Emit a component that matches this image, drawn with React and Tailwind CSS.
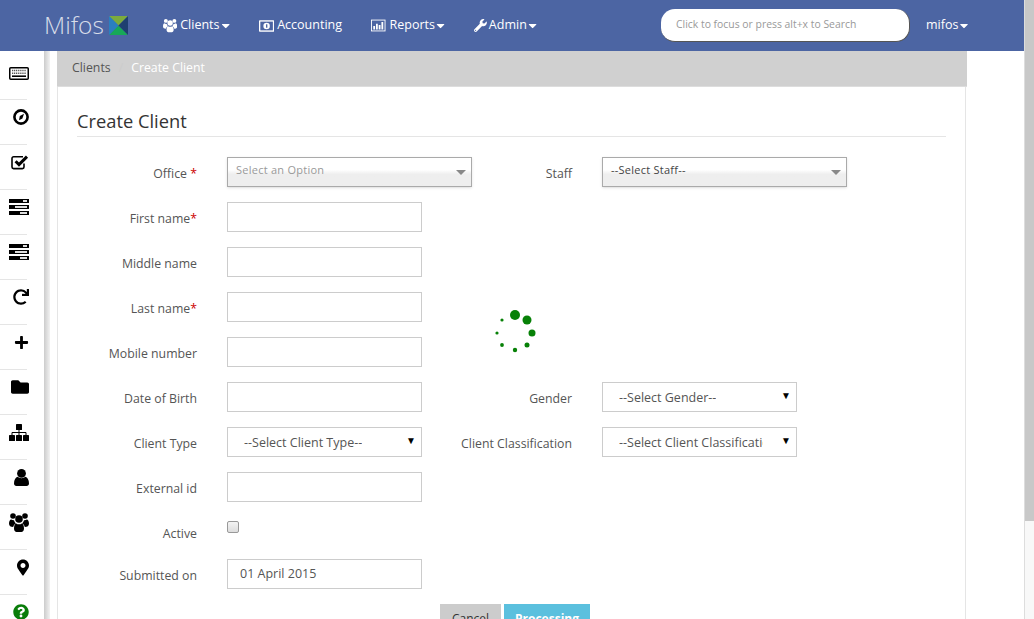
import React from 'react';
import { FaWrench, FaCaretDown, FaRedo, FaPlus, FaFolder, FaMapMarkerAlt, FaQuestionCircle } from 'react-icons/fa';

function KeyboardIcon({ className }) {
  return (
    <svg viewBox="0 0 20 13" className={className}>
      <rect x="0.75" y="0.75" width="18.5" height="11.5" rx="1" fill="#fff" stroke="#000" strokeWidth="1.5" />
      <path d="M3 3.5h14M3 6.2h14" stroke="#555" strokeWidth="1.4" strokeDasharray="1.2 0.7" />
      <path d="M3 9.2h14" stroke="#000" strokeWidth="1.6" />
    </svg>
  );
}

function CompassIcon({ className }) {
  return (
    <svg viewBox="0 0 16 16" className={className}>
      <circle cx="8" cy="8" r="6.6" fill="none" stroke="#000" strokeWidth="2.6" />
      <path d="M11 4.8 9.4 9.6 6 11.2 6.8 7Z" fill="#000" />
    </svg>
  );
}

function CheckSquareIcon({ className }) {
  return (
    <svg viewBox="0 0 18 16" className={className}>
      <path d="M13 9.5V13a1.6 1.6 0 0 1-1.6 1.6H2.6A1.6 1.6 0 0 1 1 13V4.4A1.6 1.6 0 0 1 2.6 2.8H12" fill="none" stroke="#000" strokeWidth="1.6" />
      <path d="M4.6 7.2 8 10.6 16 2.6" fill="none" stroke="#000" strokeWidth="3" />
    </svg>
  );
}

function TasksIcon({ className }) {
  return (
    <svg viewBox="0 0 20 16" className={className}>
      <rect y="0" width="20" height="4" fill="#000" />
      <rect x="14" y="1" width="4" height="2" fill="#ddd" />
      <rect y="6" width="20" height="4" fill="#000" />
      <rect x="6" y="7" width="12" height="2" fill="#ddd" />
      <rect y="12" width="20" height="4" fill="#000" />
      <rect x="11" y="13" width="7" height="2" fill="#ddd" />
    </svg>
  );
}

function SitemapIcon({ className }) {
  return (
    <svg viewBox="0 0 20 17" className={className}>
      <rect x="7" y="0" width="6" height="6" rx="0.6" fill="currentColor" />
      <path d="M10 6v5M3 11V8.5h14V11" fill="none" stroke="currentColor" strokeWidth="1" />
      <rect x="0" y="11" width="6" height="6" rx="0.6" fill="currentColor" />
      <rect x="7" y="11" width="6" height="6" rx="0.6" fill="currentColor" />
      <rect x="14" y="11" width="6" height="6" rx="0.6" fill="currentColor" />
    </svg>
  );
}

function UserIcon({ className }) {
  return (
    <svg viewBox="0 0 15 17" className={className}>
      <circle cx="7.5" cy="4.4" r="4.4" fill="currentColor" />
      <path d="M0 14.6C0 11 1.6 8.4 3.6 7.8 5.6 9.6 9.4 9.6 11.4 7.8 13.4 8.4 15 11 15 14.6 15 16 14 17 12.6 17H2.4C1 17 0 16 0 14.6Z" fill="currentColor" />
    </svg>
  );
}

function UsersIcon({ className }) {
  return (
    <svg viewBox="0 0 20 19" className={className}>
      <circle cx="4" cy="3" r="2.8" fill="currentColor" />
      <circle cx="16" cy="3" r="2.8" fill="currentColor" />
      <circle cx="10" cy="6" r="3.8" fill="currentColor" />
      <path d="M0 10.5C0 8 1 6.6 2.2 6.4 3 7 4 7.3 5 7.2 5.6 9 6.4 10 7 10.4 5.4 11 4.4 12.4 4.2 14 1.6 14 0 13 0 10.5ZM20 10.5C20 8 19 6.6 17.8 6.4 17 7 16 7.3 15 7.2 14.4 9 13.6 10 13 10.4 14.6 11 15.6 12.4 15.8 14 18.4 14 20 13 20 10.5Z" fill="currentColor" />
      <path d="M5 15.5C5 12.6 5.8 10.8 7.2 10.4 8.6 11.6 11.4 11.6 12.8 10.4 14.2 10.8 15 12.6 15 15.5 15 17.6 13.8 19 12.4 19H7.6C6.2 19 5 17.6 5 15.5Z" fill="currentColor" />
    </svg>
  );
}

function MoneyIcon({ className }) {
  return (
    <svg viewBox="0 0 16 12" className={className}>
      <rect width="16" height="12" rx="0.8" fill="#fff" />
      <rect x="1.4" y="1.4" width="13.2" height="9.2" fill="#4c65a3" />
      <circle cx="8" cy="6" r="3.4" fill="#fff" />
      <rect x="7.4" y="4.2" width="1.4" height="3.6" fill="#4c65a3" />
    </svg>
  );
}

function BarChartIcon({ className }) {
  return (
    <svg viewBox="0 0 16 13" className={className}>
      <rect x="0.5" y="0.5" width="15" height="12" fill="none" stroke="#fff" />
      <path d="M2.5 7h2v4h-2ZM5.5 4.5h2V11h-2ZM8.5 6h2v5h-2ZM11.5 2.5h2V11h-2Z" fill="#fff" />
    </svg>
  );
}

function Caret() {
  return <FaCaretDown className="ml-[1px] h-[13px] w-[10px]" />;
}

function NavItem({ icon, label, caret, className }) {
  return (
    <div className={`flex items-center text-[12.5px] text-white ${className}`}>
      {icon}
      <span>{label}</span>
      {caret && <Caret />}
    </div>
  );
}

function Logo() {
  return (
    <div className="ml-[44px] flex w-[85px] items-center">
      <span className="w-[65px] shrink-0 text-[24.5px] leading-none font-light text-[#d8dde9]">Mifos</span>
      <svg viewBox="0 0 19 19" className="h-[19px] w-[19px] shrink-0">
        <polygon points="0,0 19,0 9.5,9.5" fill="#7cab3c" />
        <polygon points="0,19 19,19 9.5,9.5" fill="#17a858" />
        <polygon points="0,0 0,19 9.5,9.5" fill="#2a7fc0" />
        <polygon points="19,0 19,19 9.5,9.5" fill="#1e3f70" />
      </svg>
    </div>
  );
}

function TopBar() {
  return (
    <div className="flex h-[51px] shrink-0 items-center bg-[#4c65a3]">
      <Logo />
      <NavItem className="ml-[34px] w-[67px]" icon={<UsersIcon className="mr-[3px] h-[15px] w-[15px]" />} label="Clients" caret />
      <NavItem className="ml-[29px] w-[83px]" icon={<MoneyIcon className="mr-[3px] h-[12px] w-[16px]" />} label="Accounting" />
      <NavItem className="ml-[29px] w-[74px]" icon={<BarChartIcon className="mr-[4px] h-[13px] w-[16px]" />} label="Reports" caret />
      <NavItem className="ml-[29px] w-[63px]" icon={<FaWrench className="mr-[2px] h-[13px] w-[14px]" />} label="Admin" caret />
      <div className="ml-[124px] flex h-[33px] w-[249px] items-center rounded-[14px] border-r border-b border-[#555] bg-white pl-[15px] text-[10.4px] text-[#999]">
        Click to focus or press alt+x to Search
      </div>
      <NavItem className="ml-[16px]" label="mifos" caret />
    </div>
  );
}

const sideIcons = [
  { icon: KeyboardIcon, cls: 'h-[13px] w-[20px]' },
  { icon: CompassIcon, cls: 'h-[16px] w-[16px]' },
  { icon: CheckSquareIcon, cls: 'h-[16px] w-[18px]' },
  { icon: TasksIcon, cls: 'h-[16px] w-[20px]' },
  { icon: TasksIcon, cls: 'h-[16px] w-[20px]' },
  { icon: FaRedo, cls: 'h-[16px] w-[16px]' },
  { icon: FaPlus, cls: 'h-[15px] w-[15px]' },
  { icon: FaFolder, cls: 'h-[18px] w-[18px]' },
  { icon: SitemapIcon, cls: 'h-[17px] w-[20px]' },
  { icon: UserIcon, cls: 'h-[17px] w-[15px]' },
  { icon: UsersIcon, cls: 'h-[19px] w-[20px]' },
  { icon: FaMapMarkerAlt, cls: 'h-[17px] w-[12px]' },
  { icon: FaQuestionCircle, cls: 'h-[16px] w-[16px] text-[#0a7d0a]' },
];

function Sidebar() {
  return (
    <div className="flex w-[44px] shrink-0 flex-col bg-white">
      {sideIcons.map((item, i) => {
        const Icon = item.icon;
        return (
          <div key={i} className="w-[29px] shrink-0">
            <div className={`flex items-center justify-end text-black ${i === 0 ? 'h-[48px] pb-[4px]' : 'h-[44px] pb-[10px]'}`}>
              <Icon className={item.cls} />
            </div>
            <div className="h-px w-[27px] bg-[#e5e5e5]" />
          </div>
        );
      })}
    </div>
  );
}

function Label({ children, req }) {
  return (
    <label className="pt-[8px] text-right text-[12.3px] leading-[17px] text-[#555]">
      {children}
      {req && <span className="text-[#c00]">*</span>}
    </label>
  );
}

function Input({ value }) {
  return (
    <div className="flex h-[30px] w-[195px] items-center border border-[#ccc] bg-white px-3 text-[12.5px] text-[#555]">
      {value}
    </div>
  );
}

function ChosenSelect({ label, muted }) {
  return (
    <div className="relative flex h-[30px] w-[245px] border border-[#aaa] bg-gradient-to-b from-white from-[42%] to-[#eee] to-[58%] pt-[4px] pl-2 text-[11px] leading-[16px] shadow-sm">
      <span className={muted ? 'tracking-[0.25px] text-[#999]' : 'tracking-[0.25px] text-[#444]'}>{label}</span>
      <span className="absolute top-[12px] right-[5px] h-0 w-0 border-x-[5px] border-t-[5px] border-x-transparent border-t-[#888]" />
    </div>
  );
}

function Select({ label }) {
  return (
    <div className="relative flex h-[30px] w-[195px] items-center border border-[#ccc] bg-white pt-[2px] pr-[33px] pl-4 text-[12.5px] text-[#555]">
      <span className="overflow-hidden whitespace-nowrap">{label}</span>
      <span className="absolute top-[7px] right-[5px] text-[10px] leading-none text-black">▼</span>
    </div>
  );
}

function Spinner() {
  const dots = [
    [515, 315, 5], [527, 320, 4.5], [532, 333, 3.5], [527, 345, 2.5],
    [515, 350, 2.2], [502, 345, 1.9], [497, 333, 1.6], [502, 320, 1.6],
  ];
  return (
    <svg viewBox="490 305 50 50" className="absolute top-[305px] left-[490px] h-[50px] w-[50px]">
      {dots.map(([cx, cy, r], i) => <circle key={i} cx={cx} cy={cy} r={r} fill="#078107" />)}
    </svg>
  );
}

function Form() {
  return (
    <div className="mt-[20px] grid grid-cols-[120px_225px_150px_275px] gap-y-[15px]">
      <Label>Office <span className="text-[#c00]">*</span></Label>
      <div className="ml-[30px]"><ChosenSelect label="Select an Option" muted /></div>
      <Label>Staff</Label>
      <div className="ml-[30px]"><ChosenSelect label="--Select Staff--" /></div>

      <Label req>First name</Label>
      <div className="col-span-3 ml-[30px]"><Input /></div>

      <Label>Middle name</Label>
      <div className="col-span-3 ml-[30px]"><Input /></div>

      <Label req>Last name</Label>
      <div className="col-span-3 ml-[30px]"><Input /></div>

      <Label>Mobile number</Label>
      <div className="col-span-3 ml-[30px]"><Input /></div>

      <Label>Date of Birth</Label>
      <div className="ml-[30px]"><Input /></div>
      <Label>Gender</Label>
      <div className="ml-[30px]"><Select label="--Select Gender--" /></div>

      <Label>Client Type</Label>
      <div className="ml-[30px]"><Select label="--Select Client Type--" /></div>
      <Label>Client Classification</Label>
      <div className="ml-[30px]"><Select label="--Select Client Classification--" /></div>

      <Label>External id</Label>
      <div className="col-span-3 ml-[30px]"><Input /></div>

      <Label>Active</Label>
      <div className="col-span-3 ml-[30px] h-[27px]">
        <div className="mt-[4px] h-[12px] w-[12px] rounded-[2px] border border-[#999] bg-gradient-to-b from-[#f4f4f4] to-[#ddd]" />
      </div>

      <Label>Submitted on</Label>
      <div className="col-span-3 ml-[30px]"><Input value="01 April 2015" /></div>
    </div>
  );
}

export default function App() {
  return (
    <div className="relative flex h-[619px] overflow-hidden bg-white font-['Open_Sans',sans-serif]">
      <div className="flex min-w-0 flex-1 flex-col">
        <TopBar />
        <div className="flex min-h-0 flex-1">
          <Sidebar />
          <div className="w-[6px] shrink-0 bg-gradient-to-r from-[#ccc] to-[#f2f2f2]" />
          <div className="ml-[7px] flex w-[910px] shrink-0 flex-col">
            <div className="flex h-[36px] shrink-0 items-center border-b border-[#ddd] bg-[#d0d0d0] pl-[15px] text-[12.3px]">
              <span className="text-[#555]">Clients</span>
              <span className="mx-[8px] text-[#ccc]">/</span>
              <span className="text-white">Create Client</span>
            </div>
            <div className="mr-[1px] flex-1 border-x border-[#e5e5e5] px-[19px]">
              <h3 className="mt-[20px] border-b border-[#e5e5e5] pb-[2px] text-[18.3px] leading-[27px] text-[#333]">Create Client</h3>
              <Form />
              <div className="mt-[15px] ml-[363px] flex gap-[3px] text-[12px]">
                <div className="flex h-[30px] w-[61px] items-center justify-center bg-[#ccc] text-[#333]">Cancel</div>
                <div className="flex h-[30px] w-[86px] items-center justify-center bg-[#5bc0de] font-bold text-white">Processing</div>
              </div>
            </div>
          </div>
        </div>
      </div>
      <div className="w-[10px] shrink-0 border-l border-[#ddd] bg-[#f8f8f8]">
        <div className="h-[521px] bg-[#c8c8c8]" />
      </div>
      <Spinner />
    </div>
  );
}
